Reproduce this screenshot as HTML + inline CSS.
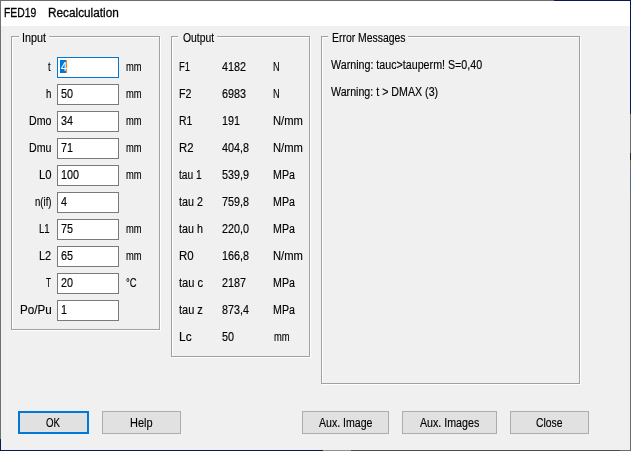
<!DOCTYPE html>
<html><head><meta charset="utf-8"><title>FED19 Recalculation</title>
<style>
html,body{margin:0;padding:0;}
body{width:631px;height:451px;overflow:hidden;background:#f0f0f0;position:relative;font-family:"Liberation Sans",sans-serif;color:#000;}
.abs{position:absolute;}
.t{-webkit-text-stroke:0.15px currentColor;position:absolute;white-space:nowrap;font-size:12.5px;line-height:14px;height:14px;transform-origin:0 0;}
.grp{position:absolute;border:1px solid #a0a0a0;box-shadow:1px 1px 0 #fff, inset 1px 1px 0 #fff;box-sizing:border-box;}
.leg{position:absolute;background:#f0f0f0;height:14px;top:31px;}
.ed{position:absolute;box-sizing:border-box;width:62px;height:21px;background:#fff;border:1px solid #7a7a7a;}
.btn{position:absolute;box-sizing:border-box;height:23px;top:411px;background:#e1e1e1;border:1px solid #adadad;}
</style></head><body><div id="win" style="position:absolute;left:0;top:0;width:631px;height:451px;will-change:transform;">

<div class="abs" style="left:0;top:0;width:631px;height:26px;background:#fff;"></div>
<div class="abs" style="left:0;top:0;width:554px;height:1px;background:#6e6e6e;"></div>
<div class="abs" style="left:554px;top:0;width:77px;height:1px;background:#061c50;"></div>
<div class="abs" style="left:0;top:0;width:1px;height:439px;background:#707070;"></div>
<div class="abs" style="left:0;top:439px;width:1px;height:12px;background:#061c50;"></div>
<div class="abs" style="left:630px;top:0px;width:1px;height:114px;background:#061c50;"></div>
<div class="abs" style="left:630px;top:114px;width:1px;height:39px;background:#6e6e6e;"></div>
<div class="abs" style="left:630px;top:153px;width:1px;height:7px;background:#2a2a2a;"></div>
<div class="abs" style="left:630px;top:160px;width:1px;height:10px;background:#6e6e6e;"></div>
<div class="abs" style="left:630px;top:170px;width:1px;height:26px;background:#4f6d8f;"></div>
<div class="abs" style="left:630px;top:196px;width:1px;height:255px;background:#6c6c6c;"></div>
<div class="abs" style="left:0;top:450px;width:323px;height:1px;background:#061c50;"></div>
<div class="abs" style="left:323px;top:450px;width:28px;height:1px;background:#909090;"></div>
<div class="abs" style="left:351px;top:450px;width:269px;height:1px;background:#4c4c4c;"></div>
<div class="abs" style="left:620px;top:450px;width:11px;height:1px;background:#6c6c6c;"></div>
<div class="t" style="left:3.67px;top:5px;transform:scaleX(0.8300);line-height:16px;height:16px;-webkit-text-stroke-width:0.3px;">FED19</div>
<div class="t" style="left:47.66px;top:5px;transform:scaleX(0.9434);line-height:16px;height:16px;-webkit-text-stroke-width:0.3px;">Recalculation</div>
<div class="grp" style="left:11px;top:36px;width:149px;height:294px;"></div>
<div class="leg" style="left:19px;width:30px;"></div>
<div class="t" style="left:21.84px;top:31px;transform:scaleX(0.8599);">Input</div>
<div class="grp" style="left:171px;top:36px;width:139px;height:321px;"></div>
<div class="leg" style="left:178px;width:39px;"></div>
<div class="t" style="left:182.50px;top:31px;transform:scaleX(0.8278);">Output</div>
<div class="grp" style="left:321px;top:36px;width:259px;height:348px;"></div>
<div class="leg" style="left:328px;width:80px;"></div>
<div class="t" style="left:331.67px;top:31px;transform:scaleX(0.8336);">Error Messages</div>
<div class="t" style="left:48.20px;top:60px;transform:scaleX(0.7500);">t</div>
<div class="ed" style="left:57px;top:57px;border-color:#0078d7;"></div>
<div class="abs" style="left:60px;top:60px;width:6px;height:13px;background:#0078d7;"></div>
<div class="abs" style="left:66px;top:60px;width:1px;height:13px;background:#ff8728;"></div>
<div class="t" style="left:60.80px;top:60px;transform:scaleX(0.8630);color:#fff;">4</div>
<div class="t" style="left:125.90px;top:60px;transform:scaleX(0.7495);">mm</div>
<div class="t" style="left:45.80px;top:87px;transform:scaleX(0.7714);">h</div>
<div class="ed" style="left:57px;top:84px;border-color:#7a7a7a;"></div>
<div class="t" style="left:60.80px;top:87px;transform:scaleX(0.8630);">50</div>
<div class="t" style="left:125.90px;top:87px;transform:scaleX(0.7495);">mm</div>
<div class="t" style="left:28.75px;top:114px;transform:scaleX(0.8491);">Dmo</div>
<div class="ed" style="left:57px;top:111px;border-color:#7a7a7a;"></div>
<div class="t" style="left:60.80px;top:114px;transform:scaleX(0.8630);">34</div>
<div class="t" style="left:125.90px;top:114px;transform:scaleX(0.7495);">mm</div>
<div class="t" style="left:28.75px;top:141px;transform:scaleX(0.8491);">Dmu</div>
<div class="ed" style="left:57px;top:138px;border-color:#7a7a7a;"></div>
<div class="t" style="left:60.80px;top:141px;transform:scaleX(0.8630);">71</div>
<div class="t" style="left:125.90px;top:141px;transform:scaleX(0.7495);">mm</div>
<div class="t" style="left:38.60px;top:168px;transform:scaleX(0.9033);">L0</div>
<div class="ed" style="left:57px;top:165px;border-color:#7a7a7a;"></div>
<div class="t" style="left:61.00px;top:168px;transform:scaleX(0.8630);">100</div>
<div class="t" style="left:125.90px;top:168px;transform:scaleX(0.7495);">mm</div>
<div class="t" style="left:35.00px;top:195px;transform:scaleX(0.7676);">n(if)</div>
<div class="ed" style="left:57px;top:192px;border-color:#7a7a7a;"></div>
<div class="t" style="left:60.80px;top:195px;transform:scaleX(0.8630);">4</div>
<div class="t" style="left:39.23px;top:222px;transform:scaleX(0.7721);">L1</div>
<div class="ed" style="left:57px;top:219px;border-color:#7a7a7a;"></div>
<div class="t" style="left:60.80px;top:222px;transform:scaleX(0.8630);">75</div>
<div class="t" style="left:125.90px;top:222px;transform:scaleX(0.7495);">mm</div>
<div class="t" style="left:39.12px;top:249px;transform:scaleX(0.8802);">L2</div>
<div class="ed" style="left:57px;top:246px;border-color:#7a7a7a;"></div>
<div class="t" style="left:60.80px;top:249px;transform:scaleX(0.8630);">65</div>
<div class="t" style="left:125.90px;top:249px;transform:scaleX(0.7495);">mm</div>
<div class="t" style="left:45.60px;top:276px;transform:scaleX(0.6500);">T</div>
<div class="ed" style="left:57px;top:273px;border-color:#7a7a7a;"></div>
<div class="t" style="left:60.80px;top:276px;transform:scaleX(0.8630);">20</div>
<div class="t" style="left:125.80px;top:276px;transform:scaleX(0.7572);">°C</div>
<div class="t" style="left:19.67px;top:303px;transform:scaleX(0.9305);">Po/Pu</div>
<div class="ed" style="left:57px;top:300px;border-color:#7a7a7a;"></div>
<div class="t" style="left:61.00px;top:303px;transform:scaleX(0.8630);">1</div>
<div class="t" style="left:178.74px;top:60px;transform:scaleX(0.7554);">F1</div>
<div class="t" style="left:221.90px;top:60px;transform:scaleX(0.8630);">4182</div>
<div class="t" style="left:272.96px;top:60px;transform:scaleX(0.7375);">N</div>
<div class="t" style="left:178.65px;top:87px;transform:scaleX(0.8507);">F2</div>
<div class="t" style="left:221.90px;top:87px;transform:scaleX(0.8630);">6983</div>
<div class="t" style="left:272.96px;top:87px;transform:scaleX(0.7375);">N</div>
<div class="t" style="left:178.67px;top:114px;transform:scaleX(0.8318);">R1</div>
<div class="t" style="left:222.10px;top:114px;transform:scaleX(0.8630);">191</div>
<div class="t" style="left:272.80px;top:114px;transform:scaleX(0.8962);">N/mm</div>
<div class="t" style="left:178.59px;top:141px;transform:scaleX(0.9050);">R2</div>
<div class="t" style="left:221.90px;top:141px;transform:scaleX(0.8630);">404,8</div>
<div class="t" style="left:272.80px;top:141px;transform:scaleX(0.8962);">N/mm</div>
<div class="t" style="left:178.90px;top:168px;transform:scaleX(0.8187);">tau 1</div>
<div class="t" style="left:221.90px;top:168px;transform:scaleX(0.8630);">539,9</div>
<div class="t" style="left:272.85px;top:168px;transform:scaleX(0.8525);">MPa</div>
<div class="t" style="left:178.90px;top:195px;transform:scaleX(0.8582);">tau 2</div>
<div class="t" style="left:221.90px;top:195px;transform:scaleX(0.8630);">759,8</div>
<div class="t" style="left:272.85px;top:195px;transform:scaleX(0.8525);">MPa</div>
<div class="t" style="left:178.90px;top:222px;transform:scaleX(0.8582);">tau h</div>
<div class="t" style="left:221.90px;top:222px;transform:scaleX(0.8630);">220,0</div>
<div class="t" style="left:272.85px;top:222px;transform:scaleX(0.8525);">MPa</div>
<div class="t" style="left:178.58px;top:249px;transform:scaleX(0.9183);">R0</div>
<div class="t" style="left:222.10px;top:249px;transform:scaleX(0.8630);">166,8</div>
<div class="t" style="left:272.80px;top:249px;transform:scaleX(0.8962);">N/mm</div>
<div class="t" style="left:178.90px;top:276px;transform:scaleX(0.8901);">tau c</div>
<div class="t" style="left:221.90px;top:276px;transform:scaleX(0.8630);">2187</div>
<div class="t" style="left:272.85px;top:276px;transform:scaleX(0.8525);">MPa</div>
<div class="t" style="left:178.90px;top:303px;transform:scaleX(0.8790);">tau z</div>
<div class="t" style="left:221.90px;top:303px;transform:scaleX(0.8630);">873,4</div>
<div class="t" style="left:272.85px;top:303px;transform:scaleX(0.8525);">MPa</div>
<div class="t" style="left:178.55px;top:330px;transform:scaleX(0.9538);">Lc</div>
<div class="t" style="left:221.90px;top:330px;transform:scaleX(0.8630);">50</div>
<div class="t" style="left:273.70px;top:330px;transform:scaleX(0.7495);">mm</div>
<div class="t" style="left:331.40px;top:58px;transform:scaleX(0.8554);">Warning: tauc&gt;tauperm! S=0,40</div>
<div class="t" style="left:331.40px;top:85px;transform:scaleX(0.8529);">Warning: t &gt; DMAX (3)</div>
<div class="btn" style="left:18px;width:71px;border:2px solid #0078d7;"></div>
<div class="t" style="left:46.25px;top:416px;transform:scaleX(0.7745);">OK</div>
<div class="btn" style="left:102px;width:79px;"></div>
<div class="t" style="left:129.77px;top:416px;transform:scaleX(0.8766);">Help</div>
<div class="btn" style="left:302px;width:87px;"></div>
<div class="t" style="left:318.75px;top:416px;transform:scaleX(0.8455);">Aux. Image</div>
<div class="btn" style="left:402px;width:95px;"></div>
<div class="t" style="left:420.00px;top:416px;transform:scaleX(0.8523);">Aux. Images</div>
<div class="btn" style="left:510px;width:79px;"></div>
<div class="t" style="left:536.25px;top:416px;transform:scaleX(0.8280);">Close</div>
</div></body></html>
